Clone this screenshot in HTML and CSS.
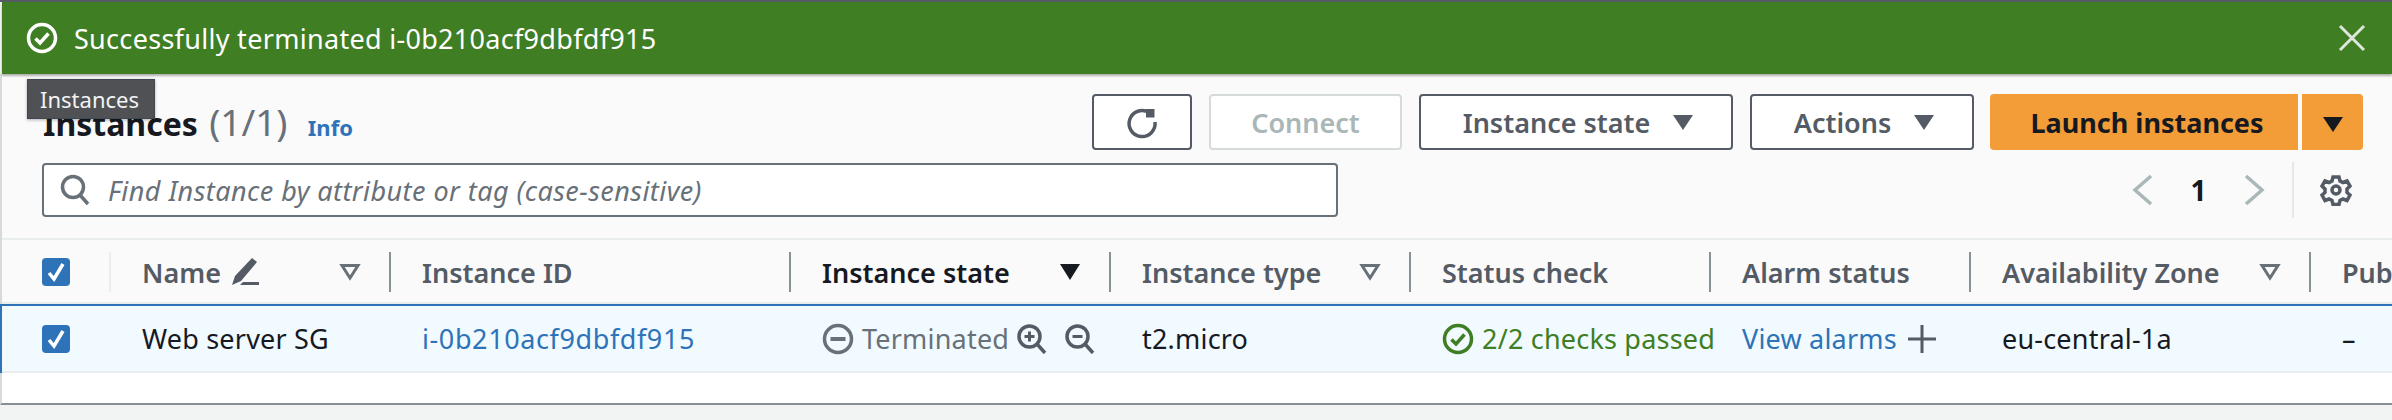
FILE: index.html
```html
<!DOCTYPE html>
<html lang="en">
<head>
    <meta charset="UTF-8">
    <title>Instances</title>
    <link rel="stylesheet" href="styles.css">
</head>
<body>
    <div class="topline"></div>
    <div class="flash">
        <svg class="flash-icon" width="32" height="32" viewBox="0 0 32 32" fill="none" stroke="#fff" stroke-width="3.5"><circle cx="16" cy="16" r="13.5"/><path d="M9.5 16.5l4.500 4.500 8.500-9.500"/></svg>
        <span class="flash-text">Successfully terminated i-0b210acf9dbfdf915</span>
        <svg class="flash-close" width="28" height="28" viewBox="0 0 28 28" fill="none" stroke="#dfe6dc" stroke-width="3"><path d="M2 2l24 24M26 2L2 26"/></svg>
    </div>
    <div class="tooltip">Instances</div>

    <div class="panel">
        <div class="head-row">
            <h1 class="title">Instances <span class="count">(1/1)</span> <a class="info">Info</a></h1>
            <div class="actions">
                <button class="btn btn-refresh">
                    <svg width="34" height="34" viewBox="0 0 34 34" fill="none" stroke="#545b64" stroke-width="3.5"><path d="M24 7.500A13 13 0 1 0 30 17"/><path d="M21 4h8.500v8.500h-8.500z" fill="#545b64" stroke="none"/></svg>
                </button>
                <button class="btn btn-connect">Connect</button>
                <button class="btn btn-state">Instance state <svg class="caret" width="24" height="18" viewBox="0 0 24 18"><path d="M2 2h20L12 17z" fill="#545b64"/></svg></button>
                <button class="btn btn-actions">Actions <svg class="caret" width="24" height="18" viewBox="0 0 24 18"><path d="M2 2h20L12 17z" fill="#545b64"/></svg></button>
                <div class="launch">
                    <button class="btn-launch">Launch instances</button>
                    <button class="btn-launch-more"><svg width="24" height="18" viewBox="0 0 24 18"><path d="M2 2h20L12 17z" fill="#16191f"/></svg></button>
                </div>
            </div>
        </div>

        <div class="search-row">
            <div class="search">
                <svg width="30" height="32" viewBox="0 0 30 32" fill="none" stroke="#687078" stroke-width="3.500"><circle cx="13" cy="13" r="10.500"/><path d="M20 21l8 9"/></svg>
                <span class="placeholder">Find Instance by attribute or tag (case-sensitive)</span>
            </div>
            <div class="pager">
                <svg width="22" height="32" viewBox="0 0 22 32" fill="none" stroke="#aab7b8" stroke-width="3.500"><path d="M19 2L3 16l16 14"/></svg>
                <span class="page-num">1</span>
                <svg width="22" height="32" viewBox="0 0 22 32" fill="none" stroke="#aab7b8" stroke-width="3.500"><path d="M3 2l16 14L3 30"/></svg>
                <span class="pager-divider"></span>
                <svg class="gear" width="32" height="32" viewBox="0 0 32 32" fill="none" stroke="#545b64" stroke-width="3.500"><circle cx="16" cy="16" r="4"/><path d="M13 3h6l1 4 3 1.500 4-1.500 3 5-3 3v3.500l3 2.500-3 5.500-4-1.500-3 1.500-1 4h-6l-1-4-3-1.500-4 1.500-3-5.500 3-2.500V15l-3-3 3-5 4 1.500L12 7z"/></svg>
            </div>
        </div>

        <div class="table">
            <div class="t-head">
                <div class="th th-check"><span class="checkbox"><svg width="18" height="20" viewBox="0 0 18 20" fill="none" stroke="#fff" stroke-width="3.500"><path d="M2 11l5 6L16 2"/></svg></span></div>
                <div class="th th-first">Name
                    <svg class="pencil" width="32" height="30" viewBox="0 0 32 30" fill="#545b64"><path d="M24 1l5 4-16 19-9 4 3-9z"/><path d="M15 25h16v3H12z"/></svg>
                    <svg class="sort" width="22" height="18" viewBox="0 0 22 18" fill="none" stroke="#687078" stroke-width="3"><path d="M3 2.500h16L11 15z"/></svg>
                </div>
                <div class="th">Instance ID</div>
                <div class="th th-active">Instance state
                    <svg class="sort" width="22" height="18" viewBox="0 0 22 18"><path d="M1 1h20L11 17z" fill="#16191f"/></svg>
                </div>
                <div class="th">Instance type
                    <svg class="sort" width="22" height="18" viewBox="0 0 22 18" fill="none" stroke="#687078" stroke-width="3"><path d="M3 2.500h16L11 15z"/></svg>
                </div>
                <div class="th">Status check</div>
                <div class="th">Alarm status</div>
                <div class="th">Availability Zone
                    <svg class="sort" width="22" height="18" viewBox="0 0 22 18" fill="none" stroke="#687078" stroke-width="3"><path d="M3 2.500h16L11 15z"/></svg>
                </div>
                <div class="th">Pub</div>
            </div>
            <div class="t-row">
                <div class="td td-check"><span class="checkbox"><svg width="18" height="20" viewBox="0 0 18 20" fill="none" stroke="#fff" stroke-width="3.500"><path d="M2 11l5 6L16 2"/></svg></span></div>
                <div class="td">Web server SG</div>
                <div class="td"><a class="link link-id">i-0b210acf9dbfdf915</a></div>
                <div class="td td-state">
                    <svg class="state-icon" width="32" height="32" viewBox="0 0 32 32" fill="none" stroke="#687078" stroke-width="3.500"><circle cx="16" cy="16" r="13.500"/><path d="M8.500 16h15" stroke-width="4"/></svg>
                    <span class="terminated">Terminated</span>
                    <svg class="zoom-in" width="30" height="30" viewBox="0 0 30 30" fill="none" stroke="#545b64" stroke-width="3.500"><circle cx="12.500" cy="12.500" r="10.500"/><path d="M20 20l8 9"/><path d="M7.500 12.500h10M12.500 7.500v10" stroke-width="3"/></svg>
                    <svg class="zoom-out" width="30" height="30" viewBox="0 0 30 30" fill="none" stroke="#545b64" stroke-width="3.500"><circle cx="12.500" cy="12.500" r="10.500"/><path d="M20 20l8 9"/><path d="M7.500 12.500h10" stroke-width="3"/></svg>
                </div>
                <div class="td">t2.micro</div>
                <div class="td td-status">
                    <svg class="state-icon" width="32" height="32" viewBox="0 0 32 32" fill="none" stroke="#3f7e23" stroke-width="3.500"><circle cx="16" cy="16" r="13.500"/><path d="M9.500 16.500l4.500 4.500 8.500-9.500"/></svg>
                    <span class="passed">2/2 checks passed</span>
                </div>
                <div class="td td-alarm"><a class="link">View alarms</a>
                    <svg class="plus" width="30" height="30" viewBox="0 0 30 30" fill="none" stroke="#545b64" stroke-width="3"><path d="M1 15h28M15 1v28"/></svg>
                </div>
                <div class="td">eu-central-1a</div>
                <div class="td">–</div>
            </div>
        </div>
        <div class="table-space"></div>
    </div>
</body>
</html>
```

FILE: styles.css
```css
* {
    box-sizing: border-box;
}
html, body {
    margin: 0;
    height: 420px;
    overflow: hidden;
}
body {
    font-family: "Noto Sans", sans-serif;
    font-size: 27px;
    color: #16191f;
    background-color: #f2f3f3;
    position: relative;
}
.topline {
    height: 2px;
    background-color: #545b64;
}
.flash {
    height: 72px;
    margin-left: 2px;
    padding: 0 26px 0 24px;
    display: flex;
    align-items: center;
    background-color: #3f7e23;
    color: #fff;
    box-shadow: 0 2px 2px rgba(0, 0, 0, 0.3);
    position: relative;
    z-index: 1;
}
.flash-text {
    margin-left: 16px;
    letter-spacing: 0.3px;
}
.flash-close {
    margin-left: auto;
}
.tooltip {
    position: absolute;
    left: 27px;
    top: 79px;
    width: 128px;
    height: 40px;
    padding-left: 12px;
    line-height: 38px;
    font-size: 22px;
    color: #f2f3f3;
    background-color: #4f5155;
    border: 1px solid #414750;
    box-shadow: 0 1px 3px rgba(0, 0, 0, 0.3);
    z-index: 2;
}
.panel {
    height: 331px;
    padding-top: 20px;
    background-color: #fafafa;
    border-left: 2px solid #d5dbdb;
    border-bottom: 2px solid #8a8f94;
}

/* toolbar */
.head-row {
    height: 56px;
    padding-left: 41px;
    display: flex;
    align-items: center;
    justify-content: space-between;
}
.title {
    margin: 0 0 2px;
    font-size: 32px;
    font-weight: 700;
    white-space: nowrap;
}
.count {
    font-size: 37px;
    font-weight: 400;
    color: #687078;
    margin-left: 3px;
}
.info {
    font-size: 22px;
    color: #2e73b8;
    margin-left: 12px;
}
.actions {
    display: flex;
    padding-right: 29px;
}
.btn {
    height: 56px;
    border: 2px solid #545b64;
    border-radius: 4px;
    background-color: #fff;
    color: #545b64;
    font-family: inherit;
    font-size: 27px;
    font-weight: 600;
    display: flex;
    align-items: center;
    justify-content: center;
    margin-right: 17px;
    padding: 0;
}
.btn-refresh {
    width: 100px;
}
.btn-connect {
    width: 193px;
    color: #aab7b8;
    border-color: #d5dbdb;
}
.btn-state {
    width: 314px;
    padding-left: 6px;
}
.btn-actions {
    width: 224px;
    margin-right: 16px;
    padding-left: 6px;
}
.caret {
    margin-left: 21px;
}
.launch {
    display: flex;
    gap: 4px;
}
.btn-launch, .btn-launch-more {
    height: 56px;
    border: none;
    background-color: #f29d38;
    color: #16191f;
    font-family: inherit;
    font-size: 27px;
    font-weight: 700;
    padding: 0;
}
.btn-launch {
    width: 308px;
    padding-left: 6px;
    border-radius: 4px 0 0 4px;
}
.btn-launch-more {
    width: 61px;
    border-radius: 0 4px 4px 0;
}

/* search + pagination */
.search-row {
    height: 54px;
    margin-top: 13px;
    padding-left: 40px;
    display: flex;
    justify-content: space-between;
}
.search {
    width: 1296px;
    height: 54px;
    padding-left: 16px;
    display: flex;
    align-items: center;
    background-color: #fff;
    border: 2px solid #687078;
    border-radius: 4px;
}
.placeholder {
    margin-left: 18px;
    font-style: italic;
    letter-spacing: 0.45px;
    color: #687078;
}
.pager {
    display: flex;
    align-items: center;
    padding-right: 40px;
}
.page-num {
    width: 89px;
    text-align: center;
    font-size: 28px;
    font-weight: 700;
}
.pager-divider {
    width: 2px;
    height: 56px;
    margin-left: 27px;
    background-color: #e5e8e8;
}
.gear {
    margin-left: 26px;
}

/* table */
.table {
    margin-top: 21px;
}
.t-head, .t-row {
    display: grid;
    grid-template-columns: 107px 280px 400px 320px 300px 300px 260px 340px 100px;
}
.t-head {
    height: 66px;
    border-top: 2px solid #eaeded;
    padding-bottom: 12px;
    padding-top: 12px;
}
.th {
    padding-left: 31px;
    padding-right: 28px;
    border-left: 2px solid #879196;
    display: flex;
    align-items: center;
    font-weight: 600;
    color: #545b64;
    white-space: nowrap;
}
.th-check {
    border-left: 0;
    padding-left: 40px;
}
.th-first {
    border-left-color: #eaeded;
}
.th-active {
    color: #16191f;
}
.sort {
    margin-left: auto;
}
.pencil {
    margin-left: 7px;
}
.t-row {
    height: 69px;
    border-top: 2px solid #2e73b8;
    border-bottom: 2px solid #eaeded;
    background-color: #f1faff;
    box-shadow: 0 -2px 0 #eaeded, -2px 0 0 #2e73b8;
}
.td {
    padding-left: 33px;
    display: flex;
    align-items: center;
    white-space: nowrap;
    letter-spacing: 0.2px;
}
.td-check {
    padding-left: 40px;
}
.checkbox {
    width: 28px;
    height: 28px;
    border-radius: 4px;
    background-color: #2e73b8;
    display: flex;
    align-items: center;
    justify-content: center;
}
.link {
    color: #2e73b8;
}
.link-id {
    letter-spacing: 0.6px;
}
.state-icon {
    flex: none;
    margin-right: 8px;
}
.terminated {
    color: #687078;
}
.zoom-in {
    margin-left: 8px;
}
.zoom-out {
    margin-left: 18px;
}
.passed {
    color: #3f7e23;
}
.plus {
    margin-left: 10px;
}
.table-space {
    height: 30px;
    background-color: #fff;
}
```
